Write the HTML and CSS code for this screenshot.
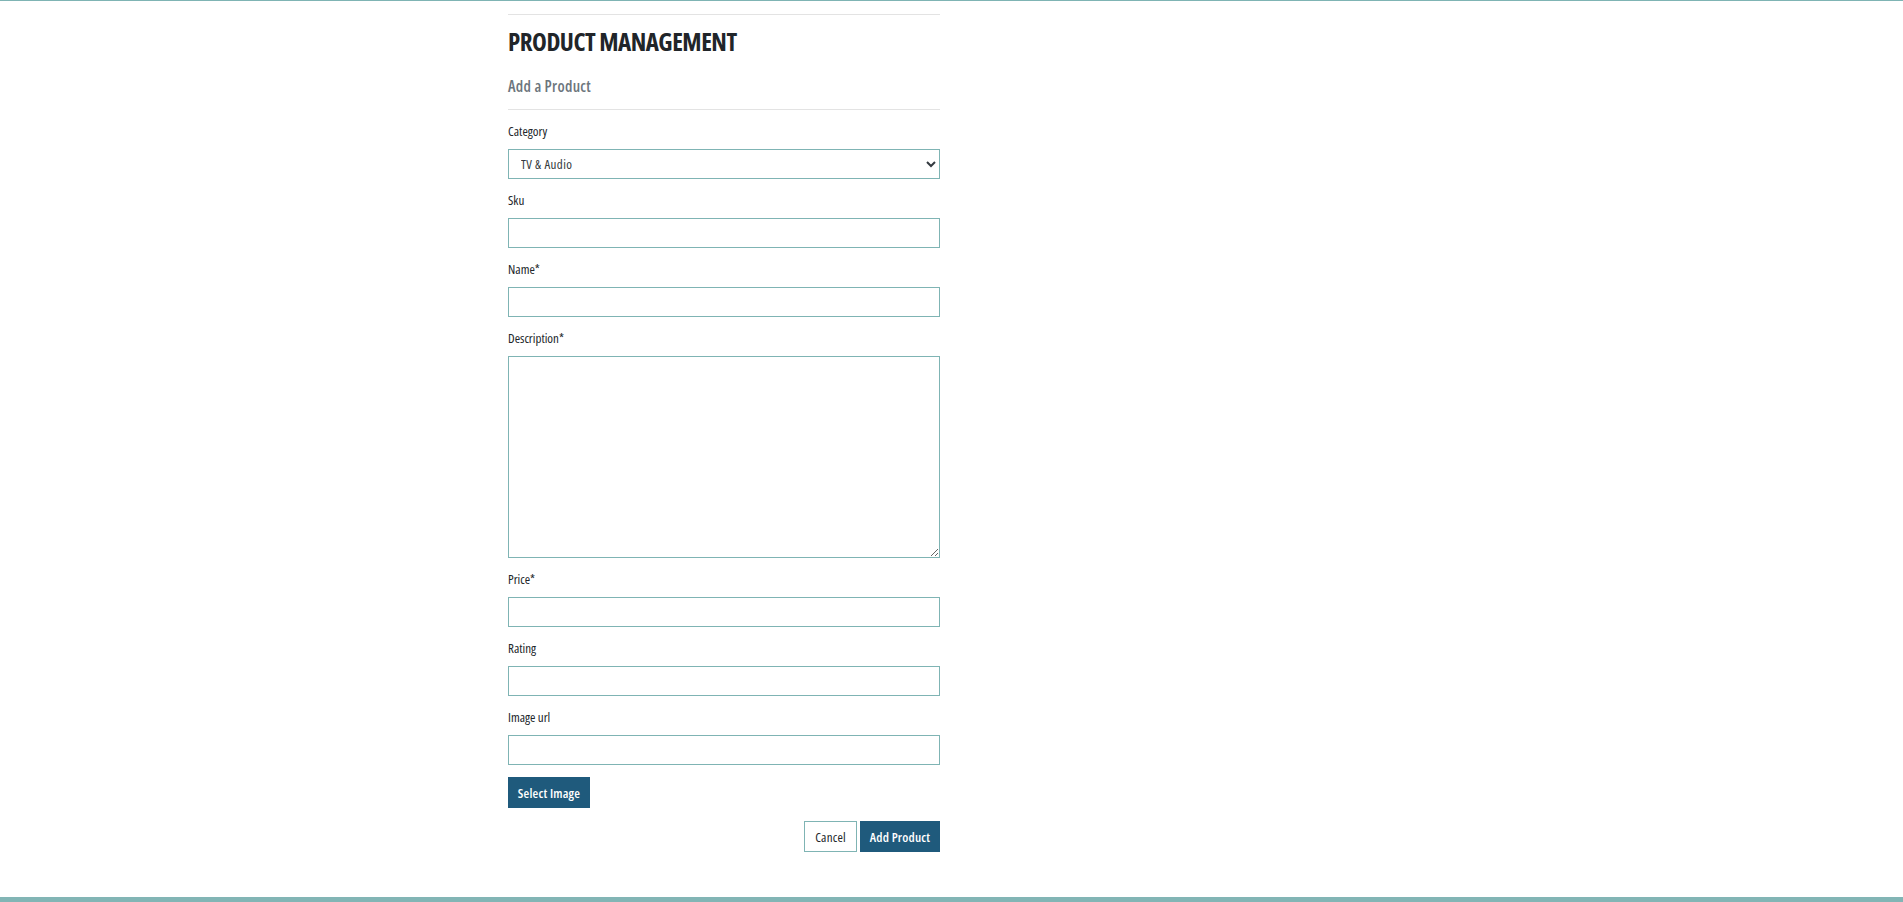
FILE: index.html
```html
<!DOCTYPE html>
<html lang="en">
<head>
<meta charset="utf-8">
<title>Product Management</title>
<link rel="stylesheet" href="styles.css">
</head>
<body>
<div class="layout">
  <main class="content">
    <hr class="rule">
    <h1 class="title">PRODUCT MANAGEMENT</h1>
    <h2 class="subtitle">Add a Product</h2>
    <hr class="rule rule-sub">
    <form class="form">
      <div class="group">
        <label class="label" for="category">Category</label>
        <select class="field select" id="category">
          <option>TV &amp; Audio</option>
        </select>
      </div>
      <div class="group">
        <label class="label" for="sku">Sku</label>
        <input class="field" id="sku" type="text">
      </div>
      <div class="group">
        <label class="label" for="name">Name*</label>
        <input class="field" id="name" type="text">
      </div>
      <div class="group">
        <label class="label" for="desc">Description*</label>
        <textarea class="field textarea" id="desc"></textarea>
      </div>
      <div class="group">
        <label class="label" for="price">Price*</label>
        <input class="field" id="price" type="text">
      </div>
      <div class="group">
        <label class="label" for="rating">Rating</label>
        <input class="field" id="rating" type="text">
      </div>
      <div class="group">
        <label class="label" for="img">Image url</label>
        <input class="field" id="img" type="text">
      </div>
      <button type="button" class="btn btn-primary btn-select">Select Image</button>
      <div class="actions">
        <button type="button" class="btn btn-outline">Cancel</button>
        <button type="button" class="btn btn-primary">Add Product</button>
      </div>
    </form>
  </main>
  <footer class="footer"></footer>
</div>
</body>
</html>
```

FILE: styles.css
```css
* { box-sizing: border-box; }
html, body { margin: 0; padding: 0; }
body {
  font-family: "Open Sans", Roboto, "Liberation Sans", sans-serif;
  font-stretch: 75%;
  color: #212529;
  background: #fff;
  border-top: 1px solid #7fb4b4;
}
.layout {
  min-height: calc(100vh - 1px);
  display: flex;
  flex-direction: column;
}
.content {
  width: 432px;
  margin-left: 508px;
  padding-top: 13px;
}
.rule {
  border: 0;
  border-top: 1px solid #e3e3e3;
  margin: 0;
}
.title {
  font-size: 25px;
  line-height: 30px;
  font-weight: 700;
  letter-spacing: -0.5px;
  margin: 11px 0 0;
  color: #212529;
}
.subtitle {
  font-size: 15.5px;
  line-height: 19px;
  font-weight: 600;
  letter-spacing: 0.3px;
  color: #6c757d;
  margin: 21px 0 0;
}
.rule-sub { margin-top: 13px; }
.form { padding-top: 11px; }
.group { margin-bottom: 11px; }
.label {
  display: block;
  font-size: 13px;
  line-height: 20px;
  margin-bottom: 8px;
  color: #212529;
}
.field {
  display: block;
  width: 100%;
  height: 30px;
  border: 1px solid #7fb4b4;
  border-radius: 0;
  background: #fff;
  font-family: inherit;
  font-stretch: 75%;
  font-size: 12px;
  color: #343a40;
  padding: 0 12px;
  margin: 0;
  outline: none;
}
.select {
  padding-left: 8px;
  font-size: 13px;
  letter-spacing: 0.4px;
}
.textarea {
  height: 202px;
  resize: vertical;
  padding: 6px 12px;
}
.btn {
  font-family: inherit;
  font-stretch: 75%;
  font-size: 13px;
  letter-spacing: 0.2px;
  height: 31px;
  border-radius: 0;
  cursor: pointer;
  padding: 0 6px;
  margin: 0;
  white-space: nowrap;
}
.btn-primary {
  background: #1f5a7c;
  border: 1px solid #1f5a7c;
  color: #fff;
  font-weight: 600;
}
.btn-outline {
  background: #fff;
  border: 1px solid #7fb4b4;
  color: #212529;
}
.btn-select {
  display: block;
  width: 82px;
  margin-top: 12px;
}
.group:last-of-type { margin-bottom: 0; }
.actions {
  display: flex;
  justify-content: flex-end;
  gap: 3px;
  margin-top: 13px;
}
.actions .btn-outline { width: 53px; }
.actions .btn-primary { width: 80px; }
.footer {
  margin-top: auto;
  height: 5px;
  background: #82b5b5;
}
```
